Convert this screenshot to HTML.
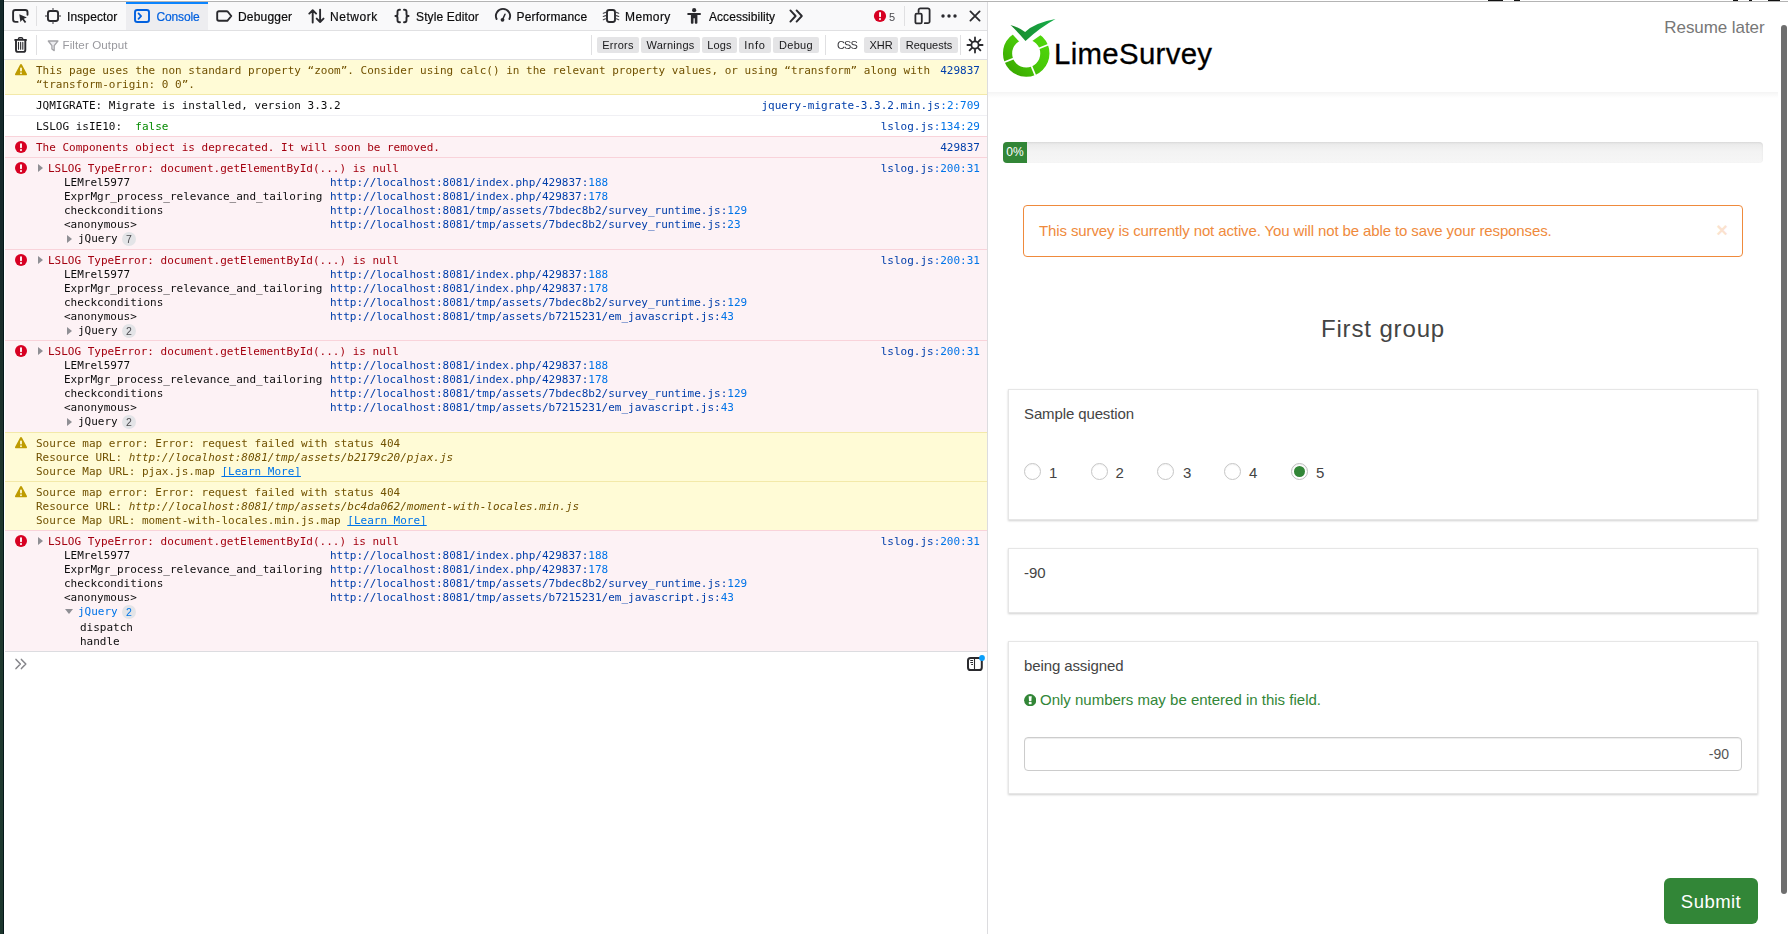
<!DOCTYPE html>
<html lang="en">
<head>
<meta charset="utf-8">
<title>LimeSurvey - Console</title>
<style>
*{box-sizing:border-box}
html,body{margin:0;padding:0}
body{width:1788px;height:934px;overflow:hidden;background:#fff;position:relative;font-family:"Liberation Sans",sans-serif}
.abs{position:absolute}
#strip{left:0;top:0;width:4px;height:934px;background:linear-gradient(#13282a 0,#17292a 24%,#1b302b 40%,#1f372d 55%,#1f3a30 86%,#1c362d 100%);border-right:1px solid #05181a}
#topline{left:4px;top:1px;width:1784px;height:1px;background:#b4b4b4}
/* ---------- devtools ---------- */
#dt{left:4px;top:2px;width:984px;height:932px;border-right:1px solid #dcdcdf;will-change:transform;overflow:hidden;font-family:"Liberation Sans",sans-serif;font-size:12px;color:#0c0c0d}
#tb{left:0;top:0;width:983px;height:29px;background:#f9f9fa;border-bottom:1px solid #e0e0e2}
#tb span{-webkit-text-stroke:.2px currentColor}
#fb{left:0;top:29px;width:983px;height:29px;background:#fff;border-bottom:1px solid #e0e0e2}
.tab{position:absolute;top:0;height:28px;line-height:28px;white-space:nowrap;color:#0c0c0d}
.tab span{position:absolute;top:0;line-height:29px}
.tab svg{position:absolute}
.sep{position:absolute;width:1px;background:#e0e0e2}
.fbtn{position:absolute;top:6px;height:16px;line-height:16px;border-radius:2px;background:#e4e4e6;color:#18181a;text-align:center;font-size:11px}
/* ---------- console rows ---------- */
.row{position:absolute;left:0;width:983px;border-bottom:1px solid #f0f0f4;font-family:"DejaVu Sans Mono",monospace;font-size:11px;line-height:14px;padding-top:3px;white-space:pre;color:#0c0c0d}
.row.warn{background:#fffbd6;color:#715100;border-bottom-color:#f3e9a9}
.row.err{background:#fdf2f5;color:#a4000f;border-bottom-color:#f9d3da}
.row .ic{position:absolute;left:11px;top:4px}
.row .msg{position:absolute;left:32px;top:4px}
.row .loc{position:absolute;right:7px;top:4px;color:#0060df}
.row .loc b,.st .u b{font-weight:normal;color:#0074e8}
.row .loc i{font-style:normal;color:#003eaa}
.tw{position:absolute;width:0;height:0;border-style:solid;border-color:transparent transparent transparent #8f8f94;border-width:4px 0 4px 5.5px}
.twd{position:absolute;width:0;height:0;border-style:solid;border-color:#8f8f94 transparent transparent transparent;border-width:5.5px 4.2px 0 4.2px}
.st{position:absolute;left:60px;color:#0c0c0d}
.st div{height:14px}
.st .u{position:absolute;left:266px;color:#003eaa}
.jq{position:absolute;left:74px;color:#0c0c0d}
.bdg{position:absolute;width:14px;height:14px;border-radius:7px;background:#e3e4e7;color:#4a4a4f;font-family:"Liberation Sans",sans-serif;font-size:10.5px;line-height:14px;text-align:center}
/* ---------- survey ---------- */
#sv{left:988px;top:2px;width:800px;height:932px;font-family:"Liberation Sans",sans-serif;font-size:15px;color:#444}
.qbox{position:absolute;left:20px;width:750px;background:#fff;border:1px solid #e6e6e6;box-shadow:0 1px 2px rgba(0,0,0,.19)}
.radio{position:absolute;width:17px;height:17px;border-radius:50%;border:1px solid #c6c6c6;background:#fff;box-shadow:inset 0 1px 1px rgba(0,0,0,.05)}
.rl{position:absolute;top:74px;line-height:18px;font-size:15px;color:#444}
</style>
</head>
<body>
<div id="strip" class="abs"></div>
<div id="topline" class="abs"></div>

<!-- ======================= DEVTOOLS ======================= -->
<div id="dt" class="abs">
<div id="tb" class="abs">
<!-- element picker -->
<svg class="abs" style="left:8px;top:6px" width="17" height="16" viewBox="0 0 17 16" fill="none" stroke="#2a2a2e" stroke-width="1.900" stroke-linecap="round" stroke-linejoin="round"><path d="M5.600 13.900H3.400a2.300 2.300 0 0 1-2.300-2.300V4.300a2.300 2.300 0 0 1 2.300-2.300h9.800a2.300 2.300 0 0 1 2.300 2.300v2.400"/><path d="M7.300 6.300l7.600 3.300-3.100 1.200 2.500 3.100-1.500 1.100-2.500-3.200-1.900 2.300z" fill="#2a2a2e" stroke="none"/></svg>
<div class="sep" style="left:32px;top:4px;height:20px"></div>
<!-- Inspector -->
<svg class="abs" style="left:41px;top:6px" width="16" height="16" viewBox="0 0 16 16" fill="none" stroke="#2a2a2e" stroke-linecap="butt"><rect x="2.950" y="2.950" width="10.100" height="10.100" rx="2.200" stroke-width="1.900"/><path d="M8 0v2.200M8 13.800V16M0 8h2.200M13.800 8H16" stroke-width="1.400" stroke="#6f6f73"/></svg>
<span class="abs" style="left:63px;top:1px;line-height:29px;letter-spacing:.12px">Inspector</span>
<!-- Console (selected) -->
<div class="abs" style="left:122px;top:0;width:82px;height:28px;background:#ededf0;border-top:2px solid #0a84ff"></div>
<svg class="abs" style="left:130px;top:6px" width="16" height="16" viewBox="0 0 16 16" fill="none" stroke="#0060df" stroke-width="1.900" stroke-linecap="round" stroke-linejoin="round"><rect x="1" y="2" width="14" height="12" rx="2.300"/><path d="M4.500 5.300L7.100 8.100l-2.600 2.800" stroke-width="1.700"/></svg>
<span class="abs" style="left:152.5px;top:1px;line-height:29px;color:#0060df;letter-spacing:-.15px">Console</span>
<!-- Debugger -->
<svg class="abs" style="left:212px;top:6px" width="17" height="16" viewBox="0 0 17 16" fill="none" stroke="#2a2a2e" stroke-width="1.900" stroke-linejoin="round"><path d="M2.900 3.200h7.700a1.700 1.700 0 0 1 1.250.55L15.300 8l-3.450 4.250a1.700 1.700 0 0 1-1.250.55H2.900a1.700 1.700 0 0 1-1.700-1.700V4.900a1.700 1.700 0 0 1 1.700-1.700z"/></svg>
<span class="abs" style="left:234px;top:1px;line-height:29px;letter-spacing:.2px">Debugger</span>
<!-- Network -->
<svg class="abs" style="left:304px;top:6px" width="17" height="16" viewBox="0 0 17 16" fill="none" stroke="#2a2a2e" stroke-width="1.900" stroke-linecap="round" stroke-linejoin="round"><path d="M4.700 14.600V2.200M1.300 5.600L4.700 2.200l3.400 3.400M12.100 1.600v12.400M8.700 10.600l3.400 3.400 3.400-3.400"/></svg>
<span class="abs" style="left:326px;top:1px;line-height:29px;letter-spacing:.55px">Network</span>
<!-- Style Editor -->
<svg class="abs" style="left:390px;top:6px" width="16" height="16" viewBox="0 0 16 16" fill="none" stroke="#2a2a2e" stroke-width="1.900" stroke-linecap="round" stroke-linejoin="round"><path d="M6 1.700H5.500a2 2 0 0 0-2 2v2.500c0 1-.8 1.800-2.100 1.800 1.300 0 2.100.8 2.100 1.800v2.500a2 2 0 0 0 2 2H6M10 1.700h.5a2 2 0 0 1 2 2v2.500c0 1 .8 1.800 2.100 1.800-1.300 0-2.100.8-2.100 1.800v2.500a2 2 0 0 1-2 2H10"/></svg>
<span class="abs" style="left:412px;top:1px;line-height:29px;letter-spacing:.13px">Style Editor</span>
<!-- Performance -->
<svg class="abs" style="left:490px;top:5px" width="18" height="16" viewBox="0 0 18 16" fill="none" stroke="#2a2a2e" stroke-width="1.900" stroke-linecap="round"><path d="M2.600 12A7.100 7.100 0 1 1 15.400 12"/><path d="M8.600 12.500L11 7.300" stroke-width="1.500"/><circle cx="8.500" cy="12.800" r="1.900" fill="#2a2a2e" stroke="none"/></svg>
<span class="abs" style="left:512.5px;top:1px;line-height:29px;letter-spacing:.2px">Performance</span>
<!-- Memory -->
<svg class="abs" style="left:598px;top:6px" width="18" height="16" viewBox="0 0 18 16" fill="none" stroke="#2a2a2e" stroke-linecap="round"><rect x="5" y="2" width="8" height="12" rx="2.200" stroke-width="1.900"/><path d="M1.300 5.300l2.300-.9M1.300 8.500l2.300-.9M1.300 11.700l2.300-.9M14.400 4.400l2.300.9M14.400 7.600l2.300.9M14.400 10.800l2.300.9" stroke-width="1.200" stroke="#4a4a4f"/></svg>
<span class="abs" style="left:621px;top:1px;line-height:29px;letter-spacing:.4px">Memory</span>
<!-- Accessibility -->
<svg class="abs" style="left:682px;top:5px" width="16" height="17" viewBox="0 0 16 17" fill="#2a2a2e"><circle cx="8.150" cy="3.200" r="2.100"/><rect x="1.200" y="5.900" width="13.800" height="2.100" rx="1"/><path d="M4.900 6.500h6.500v9.300a.9.900 0 0 1-.9.900h-.800a.9.900 0 0 1-.9-.9V11.200H7.500v4.600a.9.900 0 0 1-.9.900h-.8a.9.900 0 0 1-.9-.9z"/></svg>
<span class="abs" style="left:705px;top:1px;line-height:29px;letter-spacing:.06px">Accessibility</span>
<!-- chevron more -->
<svg class="abs" style="left:785px;top:7px" width="15" height="14" viewBox="0 0 15 14" fill="none" stroke="#2a2a2e" stroke-width="1.900" stroke-linecap="round" stroke-linejoin="round"><path d="M1.4 1.4L6.6 7l-5.2 5.6M7.6 1.4L12.8 7l-5.2 5.6"/></svg>
<!-- error count -->
<svg class="abs" style="left:869px;top:7px" width="14" height="14" viewBox="0 0 14 14"><circle cx="7" cy="7" r="6.1" fill="#d70022"/><rect x="6.1" y="3" width="1.9" height="5.2" rx=".9" fill="#fff"/><circle cx="7" cy="10.1" r="1.05" fill="#fff"/></svg>
<span class="abs" style="left:885px;top:1px;line-height:29px;font-size:11px;color:#4a4a4f;-webkit-text-stroke:0">5</span>
<div class="sep" style="left:900px;top:4px;height:20px"></div>
<!-- responsive design -->
<svg class="abs" style="left:910px;top:5px" width="17" height="18" viewBox="0 0 17 18" fill="none" stroke="#2a2a2e" stroke-width="1.800" stroke-linecap="round" stroke-linejoin="round"><path d="M4.6 5V3.2a1.8 1.8 0 0 1 1.8-1.8h7.4a1.8 1.8 0 0 1 1.8 1.8v11.2a1.8 1.8 0 0 1-1.8 1.8h-3"/><rect x="1.4" y="6.6" width="6.4" height="9.8" rx="1.4"/></svg>
<!-- dots -->
<svg class="abs" style="left:936px;top:11px" width="18" height="6" viewBox="0 0 18 6" fill="#2a2a2e"><circle cx="3" cy="3" r="1.700"/><circle cx="9" cy="3" r="1.700"/><circle cx="15" cy="3" r="1.700"/></svg>
<!-- close -->
<svg class="abs" style="left:965px;top:8px" width="12" height="12" viewBox="0 0 12 12" fill="none" stroke="#2a2a2e" stroke-width="1.800" stroke-linecap="round"><path d="M1.4 1.4l9.2 9.2M10.6 1.4l-9.2 9.2"/></svg>

</div>
<div id="fb" class="abs">
<!-- trash -->
<svg class="abs" style="left:9px;top:5px" width="16" height="18" viewBox="0 0 16 18" fill="none" stroke="#2a2a2e" stroke-linecap="round" stroke-linejoin="round"><path d="M2.100 3.900h11" stroke-width="1.800"/><path d="M5.500 3.400V2.800a1.100 1.100 0 0 1 1.100-1.100h1.900a1.100 1.100 0 0 1 1.100 1.100v.6" stroke-width="1.400"/><path d="M3 4.600v9.300a2 2 0 0 0 2 2h5.300a2 2 0 0 0 2-2V4.600" stroke-width="1.900"/><path d="M5.500 6.200v7M7.650 6.200v7M9.800 6.200v7" stroke-width="1.100"/></svg>
<div class="sep" style="left:32px;top:4px;height:20px"></div>
<!-- funnel -->
<svg class="abs" style="left:43px;top:9px" width="12" height="12" viewBox="0 0 12 12" fill="none" stroke="#a4a4a8" stroke-width="1.300" stroke-linejoin="round"><path d="M1.300 1h9.600L7.200 5.600v5L4.900 9V5.600z" fill="#ededf0"/></svg>
<span class="abs" style="left:58.5px;top:0;line-height:28px;color:#99999e;font-size:11.600px;letter-spacing:.1px">Filter Output</span>
<div class="sep" style="left:587px;top:4px;height:20px"></div>
<div class="fbtn" style="left:593px;width:42px;letter-spacing:.25px">Errors</div>
<div class="fbtn" style="left:637px;width:59px;letter-spacing:.25px">Warnings</div>
<div class="fbtn" style="left:698px;width:35px;letter-spacing:.2px">Logs</div>
<div class="fbtn" style="left:735px;width:32px;letter-spacing:.8px">Info</div>
<div class="fbtn" style="left:769px;width:46px;letter-spacing:.3px">Debug</div>
<div class="sep" style="left:821px;top:4px;height:20px"></div>
<div class="fbtn" style="left:827px;width:32px;background:none;color:#38383d;letter-spacing:-.9px">CSS</div>
<div class="fbtn" style="left:860px;width:34px">XHR</div>
<div class="fbtn" style="left:896px;width:58px">Requests</div>
<div class="sep" style="left:956px;top:4px;height:20px"></div>
<!-- gear -->
<svg class="abs" style="left:962px;top:5px" width="18" height="18" viewBox="0 0 18 18" fill="none" stroke="#2a2a2e"><circle cx="9" cy="9" r="3.600" stroke-width="1.800"/><path d="M9 1.4v3M9 13.6v3M1.4 9h3M13.6 9h3M3.6 3.6l2.2 2.2M12.2 12.2l2.2 2.2M3.6 14.4l2.2-2.2M12.2 5.800l2.2-2.2" stroke-width="1.800" stroke-linecap="round"/></svg>

</div>
<div class="row warn" style="top:58px;height:35px"><svg class="ic" width="12" height="12" viewBox="0 0 12 12"><path d="M6 0a1 1 0 0 1 .87.500l4.950 9.200A1 1 0 0 1 10.950 11.300H1.050A1 1 0 0 1 .180 9.700L5.130.500A1 1 0 0 1 6 0z" fill="#be9b00"/><rect x="5.1" y="3.6" width="1.8" height="4" rx=".8" fill="#fffbd6"/><circle cx="6" cy="9.2" r=".95" fill="#fffbd6"/></svg><span class="msg">This page uses the non standard property “zoom”. Consider using calc() in the relevant property values, or using “transform” along with
“transform-origin: 0 0”.</span><span class="loc"><i>429837</i></span></div>
<div class="row" style="top:93px;height:21px"><span class="msg">JQMIGRATE: Migrate is installed, version 3.3.2</span><span class="loc"><i>jquery-migrate-3.3.2.min.js</i>:<b>2:709</b></span></div>
<div class="row" style="top:114px;height:21px;border-bottom-color:#f9d3da"><span class="msg">LSLOG isIE10:  <span style="color:#058b00">false</span></span><span class="loc"><i>lslog.js</i>:<b>134:29</b></span></div>
<div class="row err" style="top:135px;height:21px"><svg class="ic" width="12" height="12" viewBox="0 0 12 12"><circle cx="6" cy="6" r="6" fill="#d70022"/><rect x="5.05" y="2.3" width="1.9" height="4.9" rx=".9" fill="#fff"/><circle cx="6" cy="9.1" r="1.05" fill="#fff"/></svg><span class="msg">The Components object is deprecated. It will soon be removed.</span><span class="loc"><i>429837</i></span></div>
<div class="row err" style="top:156px;height:92px"><svg class="ic" width="12" height="12" viewBox="0 0 12 12"><circle cx="6" cy="6" r="6" fill="#d70022"/><rect x="5.05" y="2.3" width="1.9" height="4.9" rx=".9" fill="#fff"/><circle cx="6" cy="9.1" r="1.05" fill="#fff"/></svg><i class="tw" style="left:34px;top:6px"></i><span class="msg" style="left:44px">LSLOG TypeError: document.getElementById(...) is null</span><span class="loc"><i>lslog.js</i>:<b>200:31</b></span><div class="st" style="top:18px"><div>LEMrel5977<span class="u">http://localhost:8081/index.php/429837:<b>188</b></span></div><div>ExprMgr_process_relevance_and_tailoring<span class="u">http://localhost:8081/index.php/429837:<b>178</b></span></div><div>checkconditions<span class="u">http://localhost:8081/tmp/assets/7bdec8b2/survey_runtime.js:<b>129</b></span></div><div>&lt;anonymous&gt;<span class="u">http://localhost:8081/tmp/assets/7bdec8b2/survey_runtime.js:<b>23</b></span></div></div><i class="tw" style="left:63px;top:77px"></i><span class="jq" style="top:74px">jQuery</span><span class="bdg" style="left:118px;top:74px">7</span></div>
<div class="row err" style="top:248px;height:91px"><svg class="ic" width="12" height="12" viewBox="0 0 12 12"><circle cx="6" cy="6" r="6" fill="#d70022"/><rect x="5.05" y="2.3" width="1.9" height="4.9" rx=".9" fill="#fff"/><circle cx="6" cy="9.1" r="1.05" fill="#fff"/></svg><i class="tw" style="left:34px;top:6px"></i><span class="msg" style="left:44px">LSLOG TypeError: document.getElementById(...) is null</span><span class="loc"><i>lslog.js</i>:<b>200:31</b></span><div class="st" style="top:18px"><div>LEMrel5977<span class="u">http://localhost:8081/index.php/429837:<b>188</b></span></div><div>ExprMgr_process_relevance_and_tailoring<span class="u">http://localhost:8081/index.php/429837:<b>178</b></span></div><div>checkconditions<span class="u">http://localhost:8081/tmp/assets/7bdec8b2/survey_runtime.js:<b>129</b></span></div><div>&lt;anonymous&gt;<span class="u">http://localhost:8081/tmp/assets/b7215231/em_javascript.js:<b>43</b></span></div></div><i class="tw" style="left:63px;top:77px"></i><span class="jq" style="top:74px">jQuery</span><span class="bdg" style="left:118px;top:74px">2</span></div>
<div class="row err" style="top:339px;height:92px;border-bottom-color:#f3e9a9"><svg class="ic" width="12" height="12" viewBox="0 0 12 12"><circle cx="6" cy="6" r="6" fill="#d70022"/><rect x="5.05" y="2.3" width="1.9" height="4.9" rx=".9" fill="#fff"/><circle cx="6" cy="9.1" r="1.05" fill="#fff"/></svg><i class="tw" style="left:34px;top:6px"></i><span class="msg" style="left:44px">LSLOG TypeError: document.getElementById(...) is null</span><span class="loc"><i>lslog.js</i>:<b>200:31</b></span><div class="st" style="top:18px"><div>LEMrel5977<span class="u">http://localhost:8081/index.php/429837:<b>188</b></span></div><div>ExprMgr_process_relevance_and_tailoring<span class="u">http://localhost:8081/index.php/429837:<b>178</b></span></div><div>checkconditions<span class="u">http://localhost:8081/tmp/assets/7bdec8b2/survey_runtime.js:<b>129</b></span></div><div>&lt;anonymous&gt;<span class="u">http://localhost:8081/tmp/assets/b7215231/em_javascript.js:<b>43</b></span></div></div><i class="tw" style="left:63px;top:77px"></i><span class="jq" style="top:74px">jQuery</span><span class="bdg" style="left:118px;top:74px">2</span></div>
<div class="row warn" style="top:431px;height:49px"><svg class="ic" width="12" height="12" viewBox="0 0 12 12"><path d="M6 0a1 1 0 0 1 .87.500l4.950 9.200A1 1 0 0 1 10.950 11.300H1.050A1 1 0 0 1 .180 9.700L5.130.500A1 1 0 0 1 6 0z" fill="#be9b00"/><rect x="5.1" y="3.6" width="1.8" height="4" rx=".8" fill="#fffbd6"/><circle cx="6" cy="9.2" r=".95" fill="#fffbd6"/></svg><span class="msg">Source map error: Error: request failed with status 404
Resource URL: <em>http://localhost:8081/tmp/assets/b2179c20/pjax.js</em>
Source Map URL: pjax.js.map <u style="color:#0074e8">[Learn More]</u></span></div>
<div class="row warn" style="top:480px;height:49px;border-bottom-color:#f9d3da"><svg class="ic" width="12" height="12" viewBox="0 0 12 12"><path d="M6 0a1 1 0 0 1 .87.500l4.950 9.200A1 1 0 0 1 10.950 11.300H1.050A1 1 0 0 1 .180 9.700L5.130.500A1 1 0 0 1 6 0z" fill="#be9b00"/><rect x="5.1" y="3.6" width="1.8" height="4" rx=".8" fill="#fffbd6"/><circle cx="6" cy="9.2" r=".95" fill="#fffbd6"/></svg><span class="msg">Source map error: Error: request failed with status 404
Resource URL: <em>http://localhost:8081/tmp/assets/bc4da062/moment-with-locales.min.js</em>
Source Map URL: moment-with-locales.min.js.map <u style="color:#0074e8">[Learn More]</u></span></div>
<div class="row err" style="top:529px;height:121px;border-bottom-color:#dcdce0"><svg class="ic" width="12" height="12" viewBox="0 0 12 12"><circle cx="6" cy="6" r="6" fill="#d70022"/><rect x="5.05" y="2.3" width="1.9" height="4.9" rx=".9" fill="#fff"/><circle cx="6" cy="9.1" r="1.05" fill="#fff"/></svg><i class="tw" style="left:34px;top:6px"></i><span class="msg" style="left:44px">LSLOG TypeError: document.getElementById(...) is null</span><span class="loc"><i>lslog.js</i>:<b>200:31</b></span><div class="st" style="top:18px"><div>LEMrel5977<span class="u">http://localhost:8081/index.php/429837:<b>188</b></span></div><div>ExprMgr_process_relevance_and_tailoring<span class="u">http://localhost:8081/index.php/429837:<b>178</b></span></div><div>checkconditions<span class="u">http://localhost:8081/tmp/assets/7bdec8b2/survey_runtime.js:<b>129</b></span></div><div>&lt;anonymous&gt;<span class="u">http://localhost:8081/tmp/assets/b7215231/em_javascript.js:<b>43</b></span></div></div><i class="twd" style="left:61px;top:78px"></i><span class="jq" style="top:74px;color:#0074e8">jQuery</span><span class="bdg" style="left:118px;top:74px;color:#0074e8">2</span><span class="jq" style="left:76px;top:90px">dispatch</span><span class="jq" style="left:76px;top:104px">handle</span></div>
<svg class="abs" style="left:10px;top:656px" width="13" height="12" viewBox="0 0 13 12" fill="none" stroke="#85858a" stroke-width="1.500" stroke-linecap="round" stroke-linejoin="round"><path d="M2 1.400L6.400 6 2 10.600M7.400 1.400L11.800 6 7.400 10.600"/></svg>
<svg class="abs" style="left:962px;top:654px;overflow:visible" width="20" height="17" viewBox="0 0 20 17" fill="none" stroke="#2a2a2e"><rect x="2" y="2" width="13.800" height="12" rx="2.600" stroke-width="2"/><path d="M8.500 2.500v11" stroke-width="1.100"/><path d="M4.300 4.500h2.700M4.300 6.500h2.700M5.200 8.500h1.800" stroke-width="1"/><circle cx="16" cy="2" r="2.900" fill="#0a9ffa" stroke="none"/></svg>

<div class="abs" style="left:0;top:58px;width:1px;height:592px;background:#fff"></div>
</div>

<!-- ======================= SURVEY ======================= -->
<div id="sv" class="abs">
<!-- clipped fragments of content above the viewport -->
<div class="abs" style="left:500px;top:-2px;width:15px;height:1px;background:#111"></div><div class="abs" style="left:526px;top:-2px;width:6px;height:1px;background:#111"></div><div class="abs" style="left:745px;top:-2px;width:5px;height:1px;background:#111"></div><div class="abs" style="left:761px;top:-2px;width:3px;height:1px;background:#111"></div><div class="abs" style="left:780px;top:-2px;width:12px;height:1px;background:#111"></div>
<!-- logo -->
<svg class="abs" style="left:8px;top:12px" width="64" height="70" viewBox="0 0 64 70">
<defs><linearGradient id="lg1" x1="0" y1="1" x2="1" y2="0"><stop offset="0" stop-color="#39a600"/><stop offset=".5" stop-color="#48c808"/><stop offset="1" stop-color="#50d80c"/></linearGradient>
<linearGradient id="lg2" x1="0" y1="0" x2="1" y2="0"><stop offset="0" stop-color="#1b8a2b"/><stop offset=".5" stop-color="#189a3a"/><stop offset="1" stop-color="#17b04c"/></linearGradient></defs>
<circle cx="30.200" cy="39.500" r="18.650" fill="none" stroke="url(#lg1)" stroke-width="9.200"/>
<g stroke="#fff" stroke-width="1.700"><path d="M30.200 39.500L53.400 30.300"/><path d="M30.200 39.500L39.800 62.600"/><path d="M30.200 39.500L7 48.700"/></g>
<path d="M11.500 15.100L22.700 27.100L28.500 33.300L36.600 26.700L51.600 16.300L40 0L15 0z" fill="#fff"/>
<path d="M14.500 11Q22 12.800 29.100 18.100Q38.700 8.800 59.500 5.100Q44.500 13.400 29.500 26.900Q20.400 16.450 14.500 11z" fill="url(#lg2)"/>
</svg>
<div class="abs" style="left:66px;top:34px;font-size:29.400px;line-height:36px;color:#000;letter-spacing:.32px;-webkit-text-stroke:.3px #000">LimeSurvey</div>
<div class="abs" style="right:23.500px;top:14px;font-size:17px;line-height:24px;color:#777;white-space:nowrap;letter-spacing:-.08px">Resume later</div>
<!-- navbar shadow -->
<div class="abs" style="left:0;top:90px;width:790px;height:6px;background:linear-gradient(rgba(0,0,0,.045),rgba(0,0,0,0))"></div>
<!-- progress -->
<div class="abs" style="left:15px;top:140px;width:760px;height:21px;border-radius:4px;background:linear-gradient(#e9e9e9 0,#f3f3f3 45%,#f6f6f6 100%);box-shadow:inset 0 1px 2px rgba(0,0,0,.08);overflow:hidden"><div style="width:24px;height:21px;background:#328637;color:#fff;font-size:12px;line-height:20px;text-align:center">0%</div></div>
<!-- alert -->
<div class="abs" style="left:35px;top:203px;width:720px;height:52px;border:1px solid #ef8a3c;border-radius:4px;color:#ef8a3c;padding:0 15px;line-height:49px;font-size:15px;white-space:nowrap"><span style="letter-spacing:-.115px">This survey is currently not active. You will not be able to save your responses.</span><span class="abs" style="right:14px;top:0;font-size:20px;line-height:49.500px;font-weight:bold;opacity:.24">×</span></div>
<!-- group title -->
<div class="abs" style="left:0;top:309px;width:790px;text-align:center;font-size:24px;line-height:36px;color:#444;letter-spacing:.86px">First group</div>
<!-- Q1 -->
<div class="qbox" style="top:387px;height:131px">
 <div class="abs" style="left:15px;top:14px;line-height:20px;letter-spacing:-.12px;white-space:nowrap">Sample question</div>
 <i class="radio" style="left:15px;top:73px"></i><span class="rl" style="left:40px">1</span>
 <i class="radio" style="left:82px;top:73px"></i><span class="rl" style="left:106.500px">2</span>
 <i class="radio" style="left:148px;top:73px"></i><span class="rl" style="left:174px">3</span>
 <i class="radio" style="left:215px;top:73px"></i><span class="rl" style="left:240px">4</span>
 <i class="radio" style="left:282px;top:73px;border-color:#bdbdbd"><b style="position:absolute;left:2px;top:2px;width:11px;height:11px;border-radius:50%;background:#328637"></b></i><span class="rl" style="left:307px">5</span>
</div>
<!-- Q2 -->
<div class="qbox" style="top:546px;height:65px">
 <div class="abs" style="left:15px;top:14px;line-height:20px">-90</div>
</div>
<!-- Q3 -->
<div class="qbox" style="top:639px;height:153px">
 <div class="abs" style="left:15px;top:14px;line-height:20px;letter-spacing:-.11px;white-space:nowrap">being assigned</div>
 <svg class="abs" style="left:15px;top:52px" width="12.400" height="12.400" viewBox="0 0 13 13"><circle cx="6.500" cy="6.500" r="6.400" fill="#328637"/><path d="M4.900 2.400h3.200l-.4 5.200H5.300z" fill="#fff"/><rect x="5.050" y="8.500" width="2.900" height="2.300" rx=".4" fill="#fff"/></svg>
 <div class="abs" style="left:31px;top:48px;line-height:20px;color:#328637;white-space:nowrap">Only numbers may be entered in this field.</div>
 <div class="abs" style="left:15px;top:95px;width:718px;height:34px;border:1px solid #ccc;border-radius:4px;box-shadow:inset 0 1px 1px rgba(0,0,0,.075);text-align:right;padding-right:12px;line-height:32px;font-size:14px;color:#555">-90</div>
</div>
<!-- submit -->
<div class="abs" style="left:676px;top:876px;width:94px;height:46px;border-radius:6px;background:#328637;color:#fff;font-size:18.500px;line-height:48px;text-align:center;letter-spacing:.45px">Submit</div>
<!-- scrollbar -->
<div class="abs" style="left:793px;top:23px;width:6px;height:869px;border-radius:3px;background:#6e6e6e"></div>

</div>
</body>
</html>
